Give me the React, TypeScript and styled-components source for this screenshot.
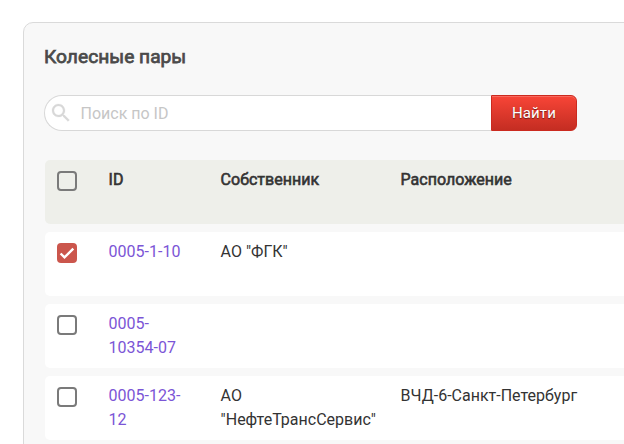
import React, { useState } from 'react';
import styled, { createGlobalStyle } from 'styled-components';

const GlobalStyle = createGlobalStyle`
  * { box-sizing: border-box; }
  html, body { margin: 0; background: #fff; overflow: hidden; }
  body, input, button { font-family: Roboto, "Liberation Sans", sans-serif; font-size: 16px; }
`;

const Page = styled.div`
  height: 444px;
  padding: 22px 0 0 23px;
  overflow: hidden;
`;

const Panel = styled.section`
  width: 900px;
  height: 600px;
  padding: 20px;
  background: #f8f8f8;
  border: 1px solid #dadada;
  border-radius: 10px;
`;

const Title = styled.h1`
  margin: 0 0 37px;
  padding-top: 1px;
  font-size: 19.2px;
  font-weight: 400;
  -webkit-text-stroke: 0.75px currentColor;
  line-height: 26px;
  height: 15px;
  color: #4a4a4a;
  white-space: nowrap;
`;

const SearchForm = styled.form`
  display: flex;
  width: 533px;
  height: 36px;
  margin-bottom: 29px;
`;

const SearchField = styled.label`
  flex: 1;
  display: flex;
  align-items: center;
  gap: 7.5px;
  padding-left: 4px;
  background: #fff;
  border: 1px solid #d8d8d8;
  border-right: 0;
  border-radius: 18px 0 0 18px;
`;

const SearchInput = styled.input`
  flex: 1;
  min-width: 0;
  padding: 0;
  border: 0;
  outline: 0;
  background: transparent;
  color: #333;
  &::placeholder { color: #c6c6c6; opacity: 1; }
`;

const SearchButton = styled.button`
  width: 86px;
  padding: 0;
  font-size: 15px;
  letter-spacing: 0.1px;
  color: #fff;
  text-shadow: 0 1px 1px rgba(0, 0, 0, 0.5);
  background: linear-gradient(#f84537, #c42d22);
  border: 1px solid #cb2a1f;
  border-radius: 0 6px 6px 0;
  box-shadow: inset 0 1px 0 rgba(255, 255, 255, 0.2);
`;

const Table = styled.div`
  display: flex;
  flex-direction: column;
  gap: 8px;
  margin-left: 1px;
`;

const Row = styled.div<{ $head?: boolean }>`
  display: grid;
  grid-template-columns: 51.6px 112px 180px 1fr;
  height: 64px;
  padding-top: 8px;
  line-height: 24px;
  color: #333;
  background: ${(p) => (p.$head ? '#eeefea' : '#fff')};
  border-radius: 5px;
  -webkit-text-stroke: ${(p) => (p.$head ? '0.6px currentColor' : '0')};
`;

const Cell = styled.div`
  padding: 0 12px;
  white-space: pre-line;
`;

const IdLink = styled.a`
  color: #7b55d6;
  cursor: pointer;
`;

const CheckBox = styled.button<{ $checked: boolean }>`
  display: flex;
  width: 20px;
  height: 20px;
  margin-top: 3px;
  padding: 0;
  background: ${(p) => (p.$checked ? '#cb564c' : 'transparent')};
  border: ${(p) => (p.$checked ? '0' : '2px solid #7a7a7a')};
  border-radius: 4px;
`;

function Check({ initial = false }: { initial?: boolean }) {
  const [checked, setChecked] = useState(initial);
  return (
    <CheckBox
      type="button"
      role="checkbox"
      aria-checked={checked}
      $checked={checked}
      onClick={() => setChecked(!checked)}
    >
      {checked && (
        <svg width="20" height="20" viewBox="0 0 20 20" fill="none">
          <path d="M3.6 10.5 7.5 14.4 16.3 5.6" stroke="#fff" strokeWidth="2.4" />
        </svg>
      )}
    </CheckBox>
  );
}

const rows = [
  { id: '0005-1-10', owner: 'АО "ФГК"', place: '', checked: true },
  { id: '0005-\n10354-07', owner: '', place: '' },
  { id: '0005-123-\n12', owner: 'АО\n"НефтеТрансСервис"', place: 'ВЧД-6-Санкт-Петербург' },
];

export default function App() {
  return (
    <Page>
      <GlobalStyle />
      <Panel>
        <Title>Колесные пары</Title>
        <SearchForm onSubmit={(e) => e.preventDefault()}>
          <SearchField>
            <svg width="24" height="24" viewBox="0 0 24 24" fill="#d8d8d8" stroke="#d8d8d8" strokeWidth="0.2">
              <path d="M15.5 14h-.79l-.28-.27C15.41 12.59 16 11.11 16 9.5 16 5.91 13.09 3 9.5 3S3 5.91 3 9.5 5.91 16 9.5 16c1.61 0 3.09-.59 4.23-1.57l.27.28v.79l5 4.99L20.49 19l-4.99-5zm-6 0C7.01 14 5 11.99 5 9.5S7.01 5 9.5 5 14 7.01 14 9.5 11.99 14 9.5 14z" />
            </svg>
            <SearchInput placeholder="Поиск по ID" />
          </SearchField>
          <SearchButton>Найти</SearchButton>
        </SearchForm>
        <Table>
          <Row $head>
            <Cell><Check /></Cell>
            <Cell>ID</Cell>
            <Cell>Собственник</Cell>
            <Cell>Расположение</Cell>
          </Row>
          {rows.map((r) => (
            <Row key={r.id}>
              <Cell><Check initial={r.checked} /></Cell>
              <Cell><IdLink>{r.id}</IdLink></Cell>
              <Cell>{r.owner}</Cell>
              <Cell>{r.place}</Cell>
            </Row>
          ))}
        </Table>
      </Panel>
    </Page>
  );
}
